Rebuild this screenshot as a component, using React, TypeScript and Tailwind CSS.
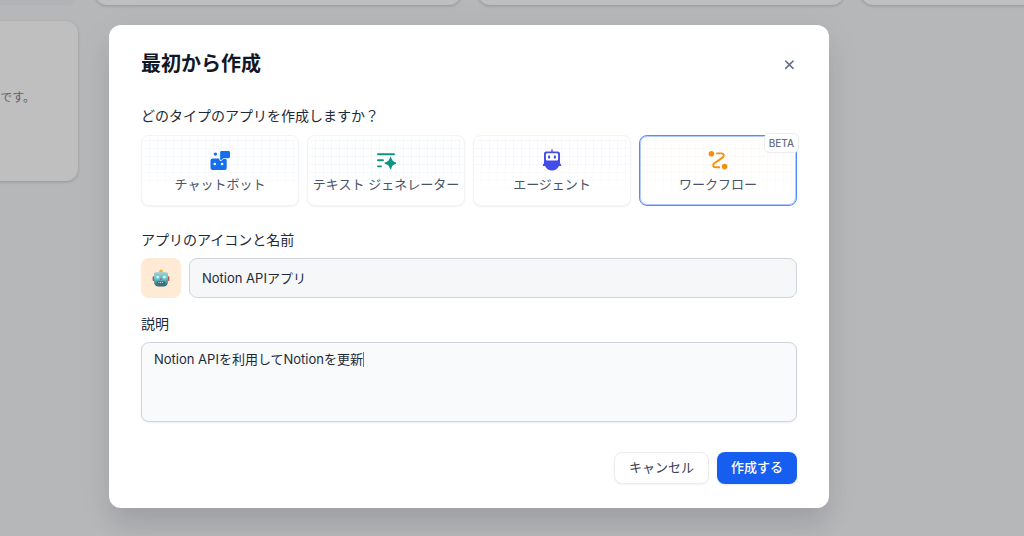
import { useState } from 'react'
import type { ReactNode } from 'react'
import clsx from 'clsx'

const ChatbotIcon = () => (
  <svg className="size-5 text-[#1570ef]" viewBox="0 0 20 20" fill="currentColor" aria-hidden="true">
    <circle cx="5.4" cy="4.1" r="1.7" />
    <rect x="0.5" y="8.4" width="16.2" height="11.6" rx="2" />
    <path
      d="M11.6 1h7a1.4 1.4 0 0 1 1.4 1.4v4.4a1.4 1.4 0 0 1-1.4 1.4h-5.2l-2.2 1.7c-.5.4-1.1 0-1.1-.6V2.4A1.4 1.4 0 0 1 11.6 1z"
      stroke="#fff"
      strokeWidth="1.6"
      paintOrder="stroke"
    />
    <circle cx="4.8" cy="14" r="1.3" fill="#fff" />
    <circle cx="12.1" cy="14" r="1.3" fill="#fff" />
  </svg>
)

const TextIcon = () => (
  <svg className="size-5 text-[#0e9384]" viewBox="0 0 20 20" fill="currentColor" aria-hidden="true">
    <path d="M2 4.2h16M2 10.3h5M2 16.4h3" stroke="currentColor" strokeWidth="1.9" strokeLinecap="round" />
    <path d="M14.1 7.2c.2-.5.8-.5 1 0 1.1 3.4 1.9 4.2 5.2 5.4.5.2.5.9 0 1.1-3.3 1.2-4.1 2-5.2 5.4-.2.5-.8.5-1 0-1.1-3.4-1.9-4.2-5.2-5.4-.5-.2-.5-.9 0-1.1 3.3-1.2 4.1-2 5.2-5.4z" />
  </svg>
)

const AgentIcon = () => (
  <svg className="size-5 overflow-visible text-[#444ce7]" viewBox="0 0 20 20" fill="currentColor" aria-hidden="true">
    <rect x="9.3" y="-0.8" width="1.4" height="3" rx="0.6" />
    <path
      fillRule="evenodd"
      d="M4.4 1.4h11.2a2.4 2.4 0 0 1 2.4 2.4v8.4c0 .5 0 1 .3 1.4l.8 1.4c.4.7 0 1-.5 1h-1.7C15.600 19 13 20.600 10 20.600S4.400 19 3.100 16H1.400c-.5 0-.9-.3-.5-1l.8-1.400c.3-.4.3-.9.3-1.400V3.800a2.400 2.400 0 0 1 2.400-2.400zM5.200 3.200a1.300 1.300 0 0 0-1.300 1.300v4.700A1.300 1.300 0 0 0 5.200 10.500h9.600a1.300 1.300 0 0 0 1.300-1.300V4.500a1.300 1.300 0 0 0-1.300-1.300z"
    />
    <rect x="6.1" y="5.6" width="2" height="2.8" rx="0.5" />
    <rect x="11.9" y="5.6" width="2" height="2.8" rx="0.5" />
  </svg>
)

const WorkflowIcon = () => (
  <svg className="size-5 text-[#f79009]" viewBox="0 0 20 20" fill="none" aria-hidden="true">
    <circle cx="3.4" cy="3.7" r="2.8" fill="currentColor" />
    <circle cx="16.6" cy="16.6" r="2.8" fill="currentColor" />
    <path
      d="M9 3.400h4.600c2.300 0 2.900 2.600 1.300 4L6.300 13.200c-1.800 1.300-1.300 4.100 1 4.100h3.900"
      stroke="currentColor"
      strokeWidth="1.9"
      strokeLinecap="round"
    />
  </svg>
)

const RobotEmoji = () => (
  <svg className="h-[18px] w-[18px]" viewBox="0 0 18 18" aria-hidden="true">
    <defs>
      <linearGradient id="face" x1="0" y1="0" x2="0" y2="1">
        <stop offset="0" stopColor="#a3cfd0" />
        <stop offset="0.5" stopColor="#6db3bb" />
        <stop offset="1" stopColor="#2d6470" />
      </linearGradient>
    </defs>
    <path d="M7.200 3.400V2.400a1.800 1.800 0 0 1 3.600 0v1z" fill="#f6ae2d" />
    <rect x="0.600" y="7.200" width="1.800" height="4.800" rx="0.800" fill="#b5574a" />
    <rect x="15.600" y="7.200" width="1.800" height="4.800" rx="0.800" fill="#b5574a" />
    <path d="M4 3.200h10c1.300 0 2 .8 2 2v7.400c0 3-1.400 4.800-4 4.800H6c-2.600 0-4-1.800-4-4.800V5.200c0-1.200.7-2 2-2z" fill="url(#face)" />
    <circle cx="5.600" cy="8" r="2.500" fill="#5ed3e6" />
    <circle cx="12.400" cy="8" r="2.500" fill="#5ed3e6" />
    <circle cx="5.600" cy="8" r="1.300" fill="#eafcff" />
    <circle cx="12.400" cy="8" r="1.300" fill="#eafcff" />
    <path d="M9 8.400l1.100 2.400H7.900z" fill="#d9473f" />
    <rect x="5" y="12.500" width="8" height="2.300" rx="1" fill="#2f5b66" />
    <path d="M6.200 13.600h5.600" stroke="#d5e6e8" strokeWidth="1" strokeDasharray="1.200 0.600" />
  </svg>
)

type AppType = { id: string; label: string; icon: ReactNode; grid: string; beta?: boolean }

const appTypes: AppType[] = [
  { id: 'chat', label: 'チャットボット', icon: <ChatbotIcon />, grid: 'text-[#f5f8fe]' },
  { id: 'completion', label: 'テキスト ジェネレーター', icon: <TextIcon />, grid: 'text-[#f3f8fb]' },
  { id: 'agent', label: 'エージェント', icon: <AgentIcon />, grid: 'text-[#f7f7fe]' },
  { id: 'workflow', label: 'ワークフロー', icon: <WorkflowIcon />, grid: 'text-[#fdf9f5]', beta: true },
]

function Backdrop() {
  const card = 'rounded-xl bg-[#bfbfbf] shadow-[0_1px_3px_rgba(16,24,40,0.22)]'
  return (
    <div className="col-start-1 row-start-1 min-w-0 overflow-hidden">
      <div className="-mt-[155px] -ml-[288px] grid auto-rows-[160px] grid-cols-[repeat(4,366px)] gap-x-[17px] gap-y-4">
        <div className="rounded-xl bg-[#b2b3b6]" />
        <div className={card} />
        <div className={card} />
        <div className={card} />
        <div className={clsx(card, 'flex justify-end pt-[68px] pr-[43px] text-[12px] leading-[18px] text-[#596174]')}>
          <p>です。</p>
        </div>
      </div>
    </div>
  )
}

export default function App() {
  const [selected, setSelected] = useState('workflow')
  const [name, setName] = useState('Notion APIアプリ')
  const [description, setDescription] = useState('Notion APIを利用してNotionを更新')
  const [focusHint, setFocusHint] = useState(true)

  return (
    <div className="grid min-h-screen grid-cols-1 bg-[#b6b7b9] [font-family:Inter,Noto_Sans_CJK_JP,sans-serif] text-[#1d2939]">
      <Backdrop />
      <main
        role="dialog"
        aria-labelledby="dialog-title"
        className="z-10 col-start-1 row-start-1 mt-[25px] mb-7 ml-[109px] w-full max-w-[720px] self-start rounded-xl bg-white px-8 pt-6 pb-6 shadow-[0_20px_24px_-4px_rgba(16,24,40,0.1),0_8px_40px_rgba(16,24,40,0.05)]"
      >
        <header className="flex items-center justify-between">
          <h1 id="dialog-title" className="text-[20px] leading-[30px] font-bold text-[#101828]">最初から作成</h1>
          <button type="button" aria-label="閉じる" className="flex size-4 items-center justify-center text-[#667085]">
            <svg className="size-4" viewBox="0 0 16 16" fill="none" stroke="currentColor" strokeWidth="1.5" strokeLinecap="round" aria-hidden="true">
              <path d="M4.700 5.100l7.300 7.300M12 5.100l-7.300 7.300" />
            </svg>
          </button>
        </header>

        <section className="mt-[26px]">
          <h2 className="text-[14px] leading-[22px]">どのタイプのアプリを作成しますか？</h2>
          <div className="mt-2 grid grid-cols-4 gap-2">
            {appTypes.map(type => (
              <button
                key={type.id}
                type="button"
                aria-pressed={selected === type.id}
                onClick={() => setSelected(type.id)}
                className={clsx(
                  'relative flex h-[71px] flex-col items-center rounded-lg border bg-white pt-[14px] text-[13px] text-[#475467]',
                  selected === type.id
                    ? 'border-[#528bff] shadow-[inset_0_0_0_1px_rgba(82,139,255,0.45)]'
                    : 'border-[#f2f4f7] shadow-[0_1px_2px_rgba(16,24,40,0.06)]',
                )}
              >
                <span
                  className={clsx(
                    'absolute inset-px rounded-lg bg-[linear-gradient(to_right,currentColor_1px,transparent_1px),linear-gradient(to_bottom,currentColor_1px,transparent_1px)] mask-[linear-gradient(to_bottom,black_40%,transparent_95%)] bg-size-[8px_8px] bg-position-[6px_3px]',
                    type.grid,
                  )}
                />
                <span className="relative">{type.icon}</span>
                <span className="relative mt-1 leading-[20px] whitespace-nowrap">{type.label}</span>
                {type.beta && (
                  <span className="absolute -top-[3px] -right-[3px] rounded-[5px] border border-[#eaecf0] bg-white px-1 text-[10px] leading-[18px] font-medium text-[#667085]">
                    BETA
                  </span>
                )}
              </button>
            ))}
          </div>
        </section>

        <section className="mt-[23px]">
          <label htmlFor="app-name" className="block text-[14px] leading-[22px]">アプリのアイコンと名前</label>
          <div className="mt-[7px] flex items-center gap-2">
            <button type="button" aria-label="アイコン" className="flex size-10 shrink-0 items-center justify-center rounded-lg bg-[#ffead5]">
              <RobotEmoji />
            </button>
            <input
              id="app-name"
              value={name}
              onChange={e => setName(e.target.value)}
              className="h-10 min-w-0 grow rounded-lg border border-[#d0d5dd] bg-[#f6f7f9] px-3 pb-px text-[13px] text-[#1d2939] outline-none"
            />
          </div>
        </section>

        <section className="mt-[15px]">
          <label htmlFor="app-description" className="block text-[14px] leading-[22px]">説明</label>
          <div className="relative mt-[7px]">
            <textarea
              id="app-description"
              value={description}
              onFocus={() => setFocusHint(false)}
              onChange={e => setDescription(e.target.value)}
              className="block h-20 w-full resize-none rounded-lg border border-[#d0d5dd] bg-[#f9fafb] px-3 py-[7px] text-[13px] leading-[18px] text-[#1d2939] shadow-[0_1px_2px_rgba(16,24,40,0.08)] outline-none"
            />
            {focusHint && <span className="absolute top-[10px] left-[222px] h-[15px] w-px bg-[#3b82f6]" />}
          </div>
        </section>

        <footer className="mt-[30px] flex justify-end gap-2 text-[13px] font-medium">
          <button type="button" className="h-8 rounded-lg border border-[#eaecf0] bg-white px-3.5 font-normal text-[#344054] shadow-[0_1px_2px_rgba(16,24,40,0.05)]">
            キャンセル
          </button>
          <button type="button" className="h-8 rounded-lg bg-[#155eef] px-3.5 text-white shadow-[0_1px_2px_rgba(16,24,40,0.1)]">
            作成する
          </button>
        </footer>
      </main>
    </div>
  )
}
